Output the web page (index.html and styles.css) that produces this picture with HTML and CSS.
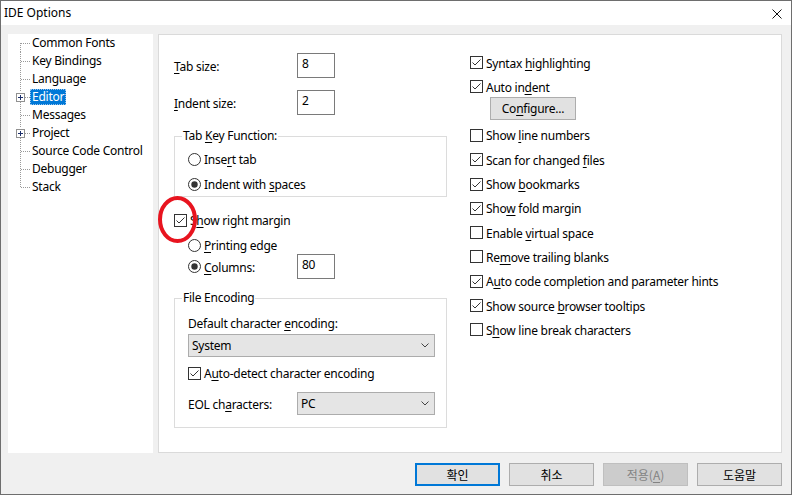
FILE: index.html
```html
<!DOCTYPE html>
<html lang="en">
<head>
<meta charset="utf-8">
<title>IDE Options</title>
<link rel="stylesheet" href="styles.css">
</head>
<body>
<div class="window">
  <div class="titlebar">
    <span class="title">IDE Options</span>
    <svg class="close" width="10" height="10" viewBox="0 0 10 10"><path d="M0.5 0.5 L9.5 9.5 M9.5 0.5 L0.5 9.5" stroke="#111" stroke-width="1" fill="none"/></svg>
  </div>
  <div class="main">
    <ul class="tree">
      <li class="node"><svg class="gut" width="22" height="18" viewBox="0 0 22 18"><path d="M12.5 9 V18 M13 9.5 H22" class="dot"/></svg><span class="label">Common Fonts</span></li>
      <li class="node"><svg class="gut" width="22" height="18" viewBox="0 0 22 18"><path d="M12.5 0 V18 M13 9.5 H22" class="dot"/></svg><span class="label">Key Bindings</span></li>
      <li class="node"><svg class="gut" width="22" height="18" viewBox="0 0 22 18"><path d="M12.5 0 V18 M13 9.5 H22" class="dot"/></svg><span class="label">Language</span></li>
      <li class="node"><svg class="gut" width="22" height="18" viewBox="0 0 22 18"><path d="M12.5 0 V4 M12.5 14 V18 M17 9.5 H22" class="dot"/><rect x="8.5" y="5.5" width="8" height="8" fill="#fff" stroke="#919191"/><path d="M10 9.5 H15 M12.5 7 V12" stroke="#1c2f6b" fill="none"/></svg><span class="label sel">Editor</span></li>
      <li class="node"><svg class="gut" width="22" height="18" viewBox="0 0 22 18"><path d="M12.5 0 V18 M13 9.5 H22" class="dot"/></svg><span class="label">Messages</span></li>
      <li class="node"><svg class="gut" width="22" height="18" viewBox="0 0 22 18"><path d="M12.5 0 V4 M12.5 14 V18 M17 9.5 H22" class="dot"/><rect x="8.5" y="5.5" width="8" height="8" fill="#fff" stroke="#919191"/><path d="M10 9.5 H15 M12.5 7 V12" stroke="#1c2f6b" fill="none"/></svg><span class="label">Project</span></li>
      <li class="node"><svg class="gut" width="22" height="18" viewBox="0 0 22 18"><path d="M12.5 0 V18 M13 9.5 H22" class="dot"/></svg><span class="label">Source Code Control</span></li>
      <li class="node"><svg class="gut" width="22" height="18" viewBox="0 0 22 18"><path d="M12.5 0 V18 M13 9.5 H22" class="dot"/></svg><span class="label">Debugger</span></li>
      <li class="node"><svg class="gut" width="22" height="18" viewBox="0 0 22 18"><path d="M12.5 0 V9.5 M13 9.5 H22" class="dot"/></svg><span class="label">Stack</span></li>
    </ul>

    <div class="panel">
      <div class="col left">
        <div class="field-row">
          <span class="lbl"><u>T</u>ab size:</span>
          <span class="input">8</span>
        </div>
        <div class="field-row gap12">
          <span class="lbl"><u>I</u>ndent size:</span>
          <span class="input">2</span>
        </div>

        <fieldset class="group g1">
          <legend>Tab <u>K</u>ey Function:</legend>
          <div class="group-body">
            <div class="opt"><svg class="rb" width="13" height="13" viewBox="0 0 13 13"><circle cx="6.5" cy="6.5" r="6" fill="#fff" stroke="#333"/></svg><span class="t">Inse<u>r</u>t tab</span></div>
            <div class="opt mt7"><svg class="rb" width="13" height="13" viewBox="0 0 13 13"><circle cx="6.5" cy="6.5" r="6" fill="#fff" stroke="#333"/><circle cx="6.5" cy="6.5" r="3.2" fill="#333"/></svg><span class="t">Indent with <u>s</u>paces</span></div>
          </div>
        </fieldset>

        <div class="opt margin-row">
          <svg class="cb" width="13" height="13" viewBox="0 0 13 13"><rect x="0.5" y="0.5" width="12" height="12" fill="#fff" stroke="#333"/><path d="M2.5 6.5 L5 9 L10.5 3.5" fill="none" stroke="#333"/></svg>
          <span class="t">S<u>h</u>ow right margin</span>
          <svg class="ring" width="40" height="48" viewBox="0 0 40 48"><ellipse cx="19.5" cy="23.5" rx="17.5" ry="21.5" fill="none" stroke="#e8141f" stroke-width="4"/></svg>
        </div>
        <div class="opt indent mt7"><svg class="rb" width="13" height="13" viewBox="0 0 13 13"><circle cx="6.5" cy="6.5" r="6" fill="#fff" stroke="#333"/></svg><span class="t"><u>P</u>rinting edge</span></div>
        <div class="field-row indent">
          <span class="opt wide"><svg class="rb" width="13" height="13" viewBox="0 0 13 13"><circle cx="6.5" cy="6.5" r="6" fill="#fff" stroke="#333"/><circle cx="6.5" cy="6.5" r="3.2" fill="#333"/></svg><span class="t"><u>C</u>olumns:</span></span>
          <span class="input">80</span>
        </div>

        <fieldset class="group g2">
          <legend>File Encoding</legend>
          <div class="group-body">
            <div class="opt"><span class="t">Default character <u>e</u>ncoding:</span></div>
            <div class="select full"><span>System</span><svg width="8" height="5" viewBox="0 0 8 5"><path d="M0.5 0.5 L4 4 L7.5 0.5" fill="none" stroke="#444"/></svg></div>
            <div class="opt mt7"><svg class="cb" width="13" height="13" viewBox="0 0 13 13"><rect x="0.5" y="0.5" width="12" height="12" fill="#fff" stroke="#333"/><path d="M2.5 6.5 L5 9 L10.5 3.5" fill="none" stroke="#333"/></svg><span class="t">A<u>u</u>to-detect character encoding</span></div>
            <div class="field-row eol">
              <span class="lbl2">EOL ch<u>a</u>racters:</span>
              <div class="select small"><span>PC</span><svg width="8" height="5" viewBox="0 0 8 5"><path d="M0.5 0.5 L4 4 L7.5 0.5" fill="none" stroke="#444"/></svg></div>
            </div>
          </div>
        </fieldset>
      </div>

      <div class="col right">
        <div class="chk"><svg class="cb" width="13" height="13" viewBox="0 0 13 13"><rect x="0.5" y="0.5" width="12" height="12" fill="#fff" stroke="#333"/><path d="M2.5 6.5 L5 9 L10.5 3.5" fill="none" stroke="#333"/></svg><span class="t">Syntax <u>h</u>ighlighting</span></div>
        <div class="chk"><svg class="cb" width="13" height="13" viewBox="0 0 13 13"><rect x="0.5" y="0.5" width="12" height="12" fill="#fff" stroke="#333"/><path d="M2.5 6.5 L5 9 L10.5 3.5" fill="none" stroke="#333"/></svg><span class="t">Auto in<u>d</u>ent</span></div>
        <div class="cfg">Co<u>n</u>figure...</div>
        <div class="chk"><svg class="cb" width="13" height="13" viewBox="0 0 13 13"><rect x="0.5" y="0.5" width="12" height="12" fill="#fff" stroke="#333"/></svg><span class="t">Show <u>l</u>ine numbers</span></div>
        <div class="chk"><svg class="cb" width="13" height="13" viewBox="0 0 13 13"><rect x="0.5" y="0.5" width="12" height="12" fill="#fff" stroke="#333"/><path d="M2.5 6.5 L5 9 L10.5 3.5" fill="none" stroke="#333"/></svg><span class="t">Scan for changed <u>f</u>iles</span></div>
        <div class="chk"><svg class="cb" width="13" height="13" viewBox="0 0 13 13"><rect x="0.5" y="0.5" width="12" height="12" fill="#fff" stroke="#333"/><path d="M2.5 6.5 L5 9 L10.5 3.5" fill="none" stroke="#333"/></svg><span class="t">Show <u>b</u>ookmarks</span></div>
        <div class="chk"><svg class="cb" width="13" height="13" viewBox="0 0 13 13"><rect x="0.5" y="0.5" width="12" height="12" fill="#fff" stroke="#333"/><path d="M2.5 6.5 L5 9 L10.5 3.5" fill="none" stroke="#333"/></svg><span class="t">Sho<u>w</u> fold margin</span></div>
        <div class="chk"><svg class="cb" width="13" height="13" viewBox="0 0 13 13"><rect x="0.5" y="0.5" width="12" height="12" fill="#fff" stroke="#333"/></svg><span class="t">Enable <u>v</u>irtual space</span></div>
        <div class="chk"><svg class="cb" width="13" height="13" viewBox="0 0 13 13"><rect x="0.5" y="0.5" width="12" height="12" fill="#fff" stroke="#333"/></svg><span class="t">Re<u>m</u>ove trailing blanks</span></div>
        <div class="chk"><svg class="cb" width="13" height="13" viewBox="0 0 13 13"><rect x="0.5" y="0.5" width="12" height="12" fill="#fff" stroke="#333"/><path d="M2.5 6.5 L5 9 L10.5 3.5" fill="none" stroke="#333"/></svg><span class="t">A<u>u</u>to code completion and parameter hints</span></div>
        <div class="chk"><svg class="cb" width="13" height="13" viewBox="0 0 13 13"><rect x="0.5" y="0.5" width="12" height="12" fill="#fff" stroke="#333"/><path d="M2.5 6.5 L5 9 L10.5 3.5" fill="none" stroke="#333"/></svg><span class="t">Show source <u>b</u>rowser tooltips</span></div>
        <div class="chk"><svg class="cb" width="13" height="13" viewBox="0 0 13 13"><rect x="0.5" y="0.5" width="12" height="12" fill="#fff" stroke="#333"/></svg><span class="t">S<u>h</u>ow line break characters</span></div>
      </div>
    </div>
  </div>

  <div class="buttons">
    <div class="btn primary">확인</div>
    <div class="btn">취소</div>
    <div class="btn disabled">적용(<u>A</u>)</div>
    <div class="btn">도움말</div>
  </div>
</div>
</body>
</html>
```

FILE: styles.css
```css
* { box-sizing: border-box; }
html, body { margin: 0; padding: 0; }
body {
  width: 795px;
  height: 503px;
  overflow: hidden;
  background: #ffffff;
  font-family: "Noto Sans", "Noto Sans CJK KR", sans-serif;
  font-size: 12px;
  line-height: 16px;
  letter-spacing: -0.25px;
  color: #000;
}
u { text-decoration: underline; text-underline-offset: 2px; text-decoration-thickness: 1px; }

.window {
  width: 792px;
  height: 495px;
  border: 1px solid #6e6e6e;
  background: #f0f0f0;
  display: flex;
  flex-direction: column;
}
.titlebar {
  height: 24px;
  flex: none;
  background: #fff;
  display: flex;
  align-items: center;
  justify-content: space-between;
  padding: 0 9px 0 3px;
}
.title { font-size: 12px; letter-spacing: 0; }
.close { margin-top: 2px; }

.main {
  display: flex;
  gap: 5px;
  padding: 9px 9px 0 7px;
  flex: none;
}
.tree {
  width: 145px;
  height: 419px;
  margin: 0;
  padding: 0;
  list-style: none;
  background: #fff;
}
.node { display: flex; align-items: center; height: 18px; }
.gut { flex: none; display: block; }
.dot { stroke: #9a9a9a; stroke-dasharray: 1 1; fill: none; }
.label { padding: 0 2px; height: 16px; line-height: 16px; white-space: nowrap; }
.sel { background: #0078d7; color: #fff; outline: 1px dotted #9ac3ea; outline-offset: -1px; }

.panel {
  width: 624px;
  height: 419px;
  background: #fff;
  border: 1px solid #dadada;
  display: flex;
  gap: 23px;
  padding: 18px 0 0 15px;
}
.col { display: flex; flex-direction: column; }
.left { width: 273px; }

.t, .lbl, .lbl2 { padding-top: 2px; }

.field-row { display: flex; align-items: center; height: 25px; }
.gap12 { margin-top: 12px; }
.lbl { width: 123px; }
.lbl2 { width: 109px; }
.input {
  width: 38px;
  height: 25px;
  border: 1px solid #7a7a7a;
  padding: 0 4px;
  line-height: 20px;
}

.group {
  margin: 0;
  border: 1px solid #dcdcdc;
  min-width: 0;
}
.group legend { padding: 0 1px; line-height: 16px; }
.g1 { margin-top: 13px; padding: 6px 11px 3px 7px; }
.g2 { margin-top: 11px; padding: 8px 11px 12px 7px; }
.group-body { padding-left: 6px; display: flex; flex-direction: column; }

.opt { display: flex; align-items: center; height: 18px; gap: 3px; white-space: nowrap; }
.mt7 { margin-top: 7px; }
.indent { padding-left: 14px; }
.wide { width: 109px; }
.margin-row { margin-top: 14px; position: relative; }
.ring { position: absolute; left: -16px; top: -15px; }
.rb, .cb { flex: none; display: block; }

.select {
  height: 23px;
  margin-top: 2px;
  background: #e5e5e5;
  border: 1px solid #acacac;
  display: flex;
  align-items: center;
  justify-content: space-between;
  padding: 1px 5px 0 3px;
}
.select svg { display: block; margin-top: -1px; }
.full { width: 247px; }
.small { width: 138px; margin-top: 0; }
.eol { margin-top: 10px; height: 23px; }

.right { padding-top: 0.5px; }
.chk { display: flex; align-items: center; height: 18px; gap: 3px; white-space: nowrap; }
.chk + .chk { margin-top: 6.3px; }
.cfg {
  width: 86px;
  height: 23px;
  margin: 1.2px 0 6.5px 20px;
  background: #e1e1e1;
  border: 1px solid #adadad;
  display: flex;
  align-items: center;
  justify-content: center;
  padding-top: 1px;
}

.buttons {
  display: flex;
  justify-content: flex-end;
  gap: 9px;
  padding: 10px 9px 0 0;
}
.btn {
  width: 85px;
  height: 23px;
  background: #e1e1e1;
  border: 1px solid #adadad;
  display: flex;
  align-items: center;
  justify-content: center;
  letter-spacing: 0;
  font-family: "Noto Sans CJK KR", "Noto Sans", sans-serif;
}
.primary { border: 2px solid #0078d7; }
.disabled { background: #cccccc; border-color: #bfbfbf; color: #838383; }
```
